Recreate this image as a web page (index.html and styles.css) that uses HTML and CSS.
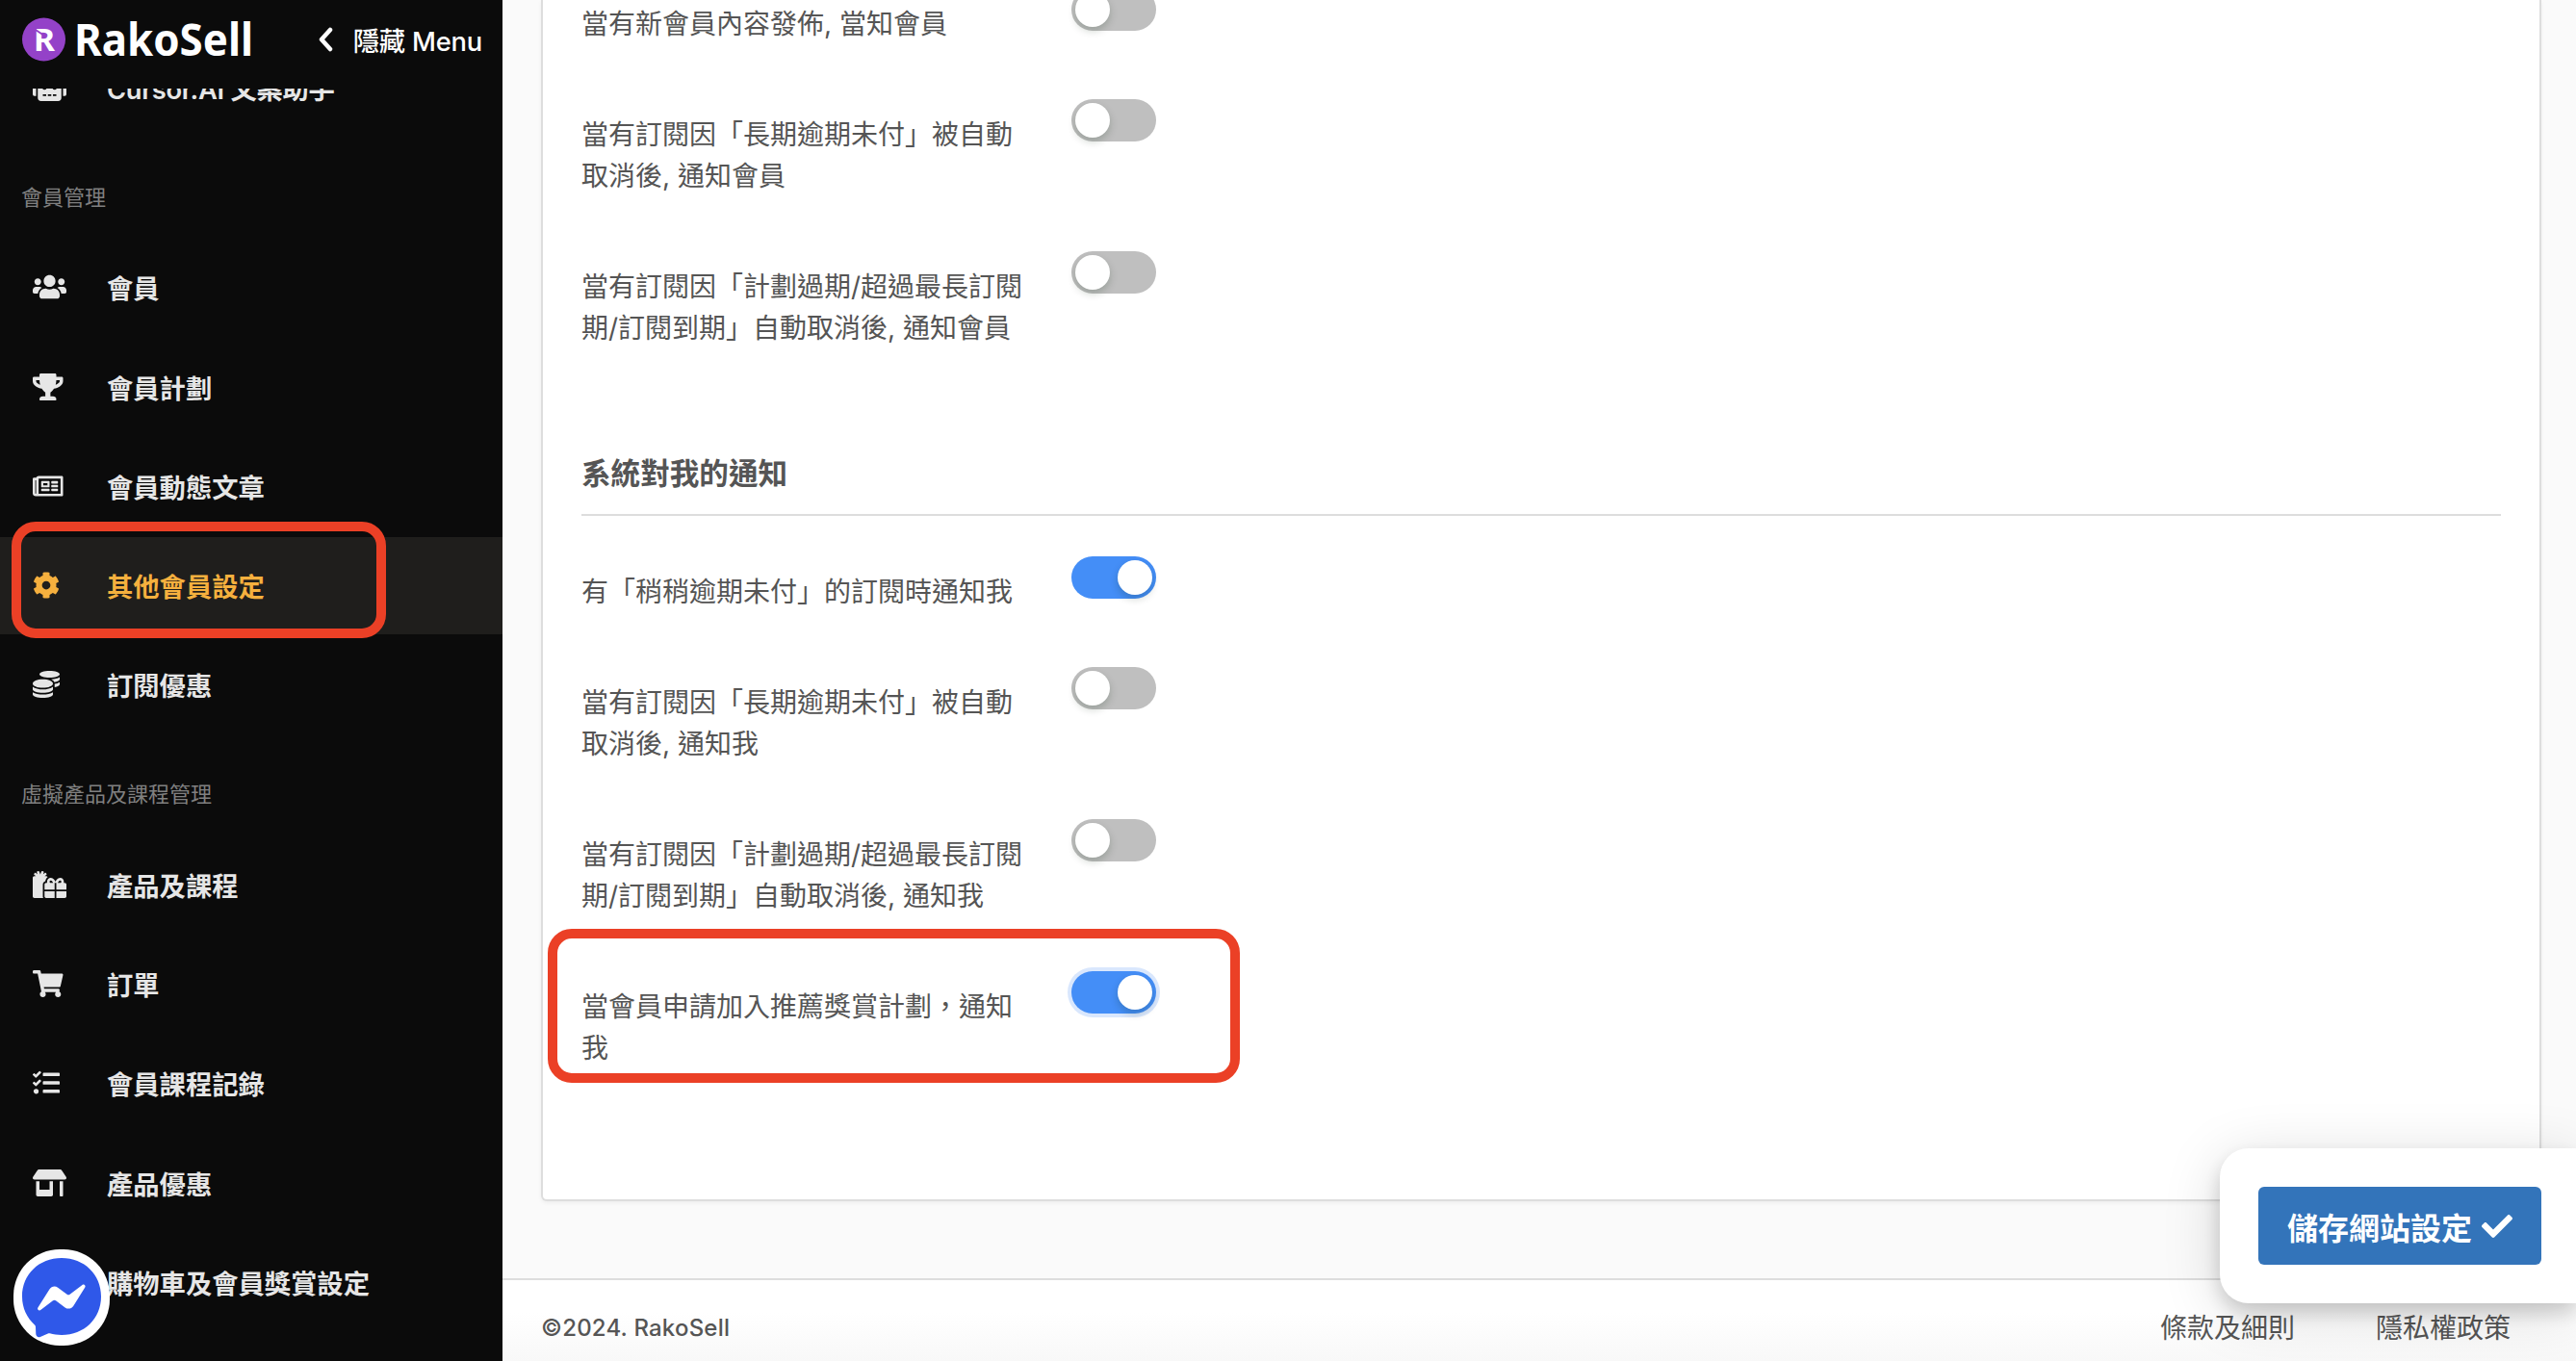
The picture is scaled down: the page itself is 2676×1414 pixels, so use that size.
FILE: index.html
```html
<!DOCTYPE html>
<html lang="zh-Hant">
<head>
    <meta charset="utf-8">
    <title>RakoSell</title>
    <link rel="stylesheet" href="styles.css">
</head>
<body>
    <div class="page">
        <aside class="sidebar">
            <div class="sidebar-header">
                <svg class="logo" width="245" height="72" viewBox="0 -12 245 72">
                    <circle cx="22.5" cy="24" r="22.5" fill="#9442c8"/>
                    <text class="logo-mark" x="12" y="36" textLength="22" lengthAdjust="spacingAndGlyphs">R</text>
                    <path d="M11 12l12 8" stroke="#9442c8" stroke-width="2"/>
                    <text class="logo-text" x="54" y="41" textLength="186" lengthAdjust="spacingAndGlyphs">RakoSell</text>
                </svg>
                <a class="menu-toggle">
                    <svg width="16" height="26" viewBox="0 0 16 26"><path d="M13 3L4 13l9 10" fill="none" stroke="#fff" stroke-width="4.5" stroke-linecap="round" stroke-linejoin="round"/></svg>
                    <span>隱藏 Menu</span>
                </a>
            </div>
            <nav class="menu">
                <ul>
                    <li class="item">
                        <svg class="icon" viewBox="0 0 640 512" preserveAspectRatio="xMinYMid"><path d="M32,224H64V416H32A31.96,31.96,0,0,1,0,384V256A31.96,31.96,0,0,1,32,224Zm512-48V448a64.06,64.06,0,0,1-64,64H160a64.06,64.06,0,0,1-64-64V176a79.97,79.97,0,0,1,80-80H288V32a32,32,0,0,1,64,0V96H464A79.97,79.97,0,0,1,544,176ZM264,256a40,40,0,1,0-40,40A40,40,0,0,0,264,256Zm-8,128H192v32h64Zm96,0H288v32h64ZM456,256a40,40,0,1,0-40,40A40,40,0,0,0,456,256Zm-8,128H384v32h64ZM640,256V384a31.96,31.96,0,0,1-32,32H576V224h32A31.96,31.96,0,0,1,640,256Z"/></svg>
                        <span>Cursor.AI 文案助手</span>
                    </li>
                    <li class="label">會員管理</li>
                    <li class="item">
                        <svg class="icon" viewBox="0 0 640 512" preserveAspectRatio="xMinYMid"><path d="M96 224c35.3 0 64-28.7 64-64s-28.7-64-64-64-64 28.7-64 64 28.7 64 64 64zm448 0c35.3 0 64-28.7 64-64s-28.7-64-64-64-64 28.7-64 64 28.7 64 64 64zm32 32h-64c-17.6 0-33.5 7.1-45.1 18.6 40.3 22.1 68.9 62 75.1 109.4h66c17.7 0 32-14.3 32-32v-32c0-35.3-28.7-64-64-64zm-256 0c61.9 0 112-50.1 112-112S381.9 32 320 32 208 82.1 208 144s50.1 112 112 112zm76.8 32h-8.3c-20.8 10-43.9 16-68.5 16s-47.6-6-68.5-16h-8.3C179.6 288 128 339.6 128 403.2V432c0 26.5 21.5 48 48 48h288c26.5 0 48-21.5 48-48v-28.8c0-63.6-51.6-115.2-115.2-115.2zm-223.7-13.4C161.5 263.1 145.6 256 128 256H64c-35.3 0-64 28.7-64 64v32c0 17.7 14.3 32 32 32h65.9c6.3-47.4 34.9-87.3 75.2-109.4z"/></svg>
                        <span>會員</span>
                    </li>
                    <li class="item">
                        <svg class="icon" viewBox="0 0 576 512" preserveAspectRatio="xMinYMid"><path d="M552 64H448V24c0-13.3-10.7-24-24-24H152c-13.3 0-24 10.7-24 24v40H24C10.7 64 0 74.7 0 88v56c0 35.7 22.5 72.4 61.9 100.7 31.5 22.7 69.8 37.1 110 41.7C203.3 338.5 240 360 240 360v72h-48c-35.3 0-64 20.7-64 56v12c0 6.6 5.4 12 12 12h296c6.6 0 12-5.4 12-12v-12c0-35.3-28.7-56-64-56h-48v-72s36.7-21.5 68.1-73.6c40.3-4.6 78.6-19 110-41.7 39.3-28.3 61.9-65 61.9-100.7V88c0-13.3-10.7-24-24-24zM99.3 192.8C74.9 175.2 64 155.6 64 144v-16h64.2c1 32.6 5.8 61.2 12.8 86.2-15.1-5.2-29.2-12.4-41.7-21.4zM512 144c0 16.1-17.7 36.1-35.3 48.8-12.5 9-26.7 16.2-41.8 21.4 7-25 11.8-53.6 12.8-86.2H512v16z"/></svg>
                        <span>會員計劃</span>
                    </li>
                    <li class="item">
                        <svg class="icon" viewBox="0 0 576 512" preserveAspectRatio="xMinYMid"><path d="M552 64H112c-20.858 0-38.643 13.377-45.248 32H24c-13.255 0-24 10.745-24 24v272c0 30.928 25.072 56 56 56h496c13.255 0 24-10.745 24-24V88c0-13.255-10.745-24-24-24zM48 392V144h16v248c0 4.411-3.589 8-8 8s-8-3.589-8-8zm480 8H111.422c.374-2.614.578-5.283.578-8V112h416v288zM172 280h136c6.627 0 12-5.373 12-12v-96c0-6.627-5.373-12-12-12H172c-6.627 0-12 5.373-12 12v96c0 6.627 5.373 12 12 12zm28-80h80v40h-80v-40zm-40 140v-24c0-6.627 5.373-12 12-12h136c6.627 0 12 5.373 12 12v24c0 6.627-5.373 12-12 12H172c-6.627 0-12-5.373-12-12zm192 0v-24c0-6.627 5.373-12 12-12h104c6.627 0 12 5.373 12 12v24c0 6.627-5.373 12-12 12H364c-6.627 0-12-5.373-12-12zm0-144v-24c0-6.627 5.373-12 12-12h104c6.627 0 12 5.373 12 12v24c0 6.627-5.373 12-12 12H364c-6.627 0-12-5.373-12-12zm0 72v-24c0-6.627 5.373-12 12-12h104c6.627 0 12 5.373 12 12v24c0 6.627-5.373 12-12 12H364c-6.627 0-12-5.373-12-12z"/></svg>
                        <span>會員動態文章</span>
                    </li>
                    <li class="item active">
                        <svg class="icon" viewBox="0 0 512 512" preserveAspectRatio="xMinYMid"><path d="M487.4 315.7l-42.6-24.6c4.3-23.2 4.3-47 0-70.2l42.6-24.6c4.9-2.8 7.1-8.6 5.5-14-11.1-35.6-30-67.8-54.7-94.6-3.8-4.1-10-5.1-14.8-2.3L380.8 110c-17.9-15.4-38.5-27.3-60.8-35.1V25.8c0-5.6-3.9-10.5-9.4-11.7-36.7-8.2-74.3-7.8-109.2 0-5.5 1.2-9.4 6.1-9.4 11.7V75c-22.2 7.9-42.8 19.8-60.8 35.1L88.7 85.5c-4.9-2.8-11-1.9-14.8 2.3-24.7 26.7-43.6 58.9-54.7 94.6-1.7 5.4.6 11.2 5.5 14L67.3 221c-4.3 23.2-4.3 47 0 70.2l-42.6 24.6c-4.9 2.8-7.1 8.6-5.5 14 11.1 35.6 30 67.8 54.7 94.6 3.8 4.1 10 5.1 14.8 2.3l42.6-24.6c17.9 15.4 38.5 27.3 60.8 35.1v49.2c0 5.6 3.9 10.5 9.4 11.7 36.7 8.2 74.3 7.8 109.2 0 5.5-1.2 9.4-6.1 9.4-11.7v-49.2c22.2-7.9 42.8-19.8 60.8-35.1l42.6 24.6c4.9 2.8 11 1.9 14.8-2.3 24.7-26.7 43.6-58.9 54.7-94.6 1.5-5.500-.7-11.300-5.600-14.100zM256 336c-44.100 0-80-35.900-80-80s35.900-80 80-80 80 35.900 80 80-35.900 80-80 80z"/></svg>
                        <span>其他會員設定</span>
                    </li>
                    <li class="item">
                        <svg class="icon" viewBox="0 0 512 512" preserveAspectRatio="xMinYMid"><path d="M0 405.3V448c0 35.3 86 64 192 64s192-28.7 192-64v-42.7C342.7 434.4 267.2 448 192 448S41.3 434.4 0 405.3zM320 128c106 0 192-28.7 192-64S426 0 320 0 128 28.7 128 64s86 64 192 64zM0 300.4V352c0 35.3 86 64 192 64s192-28.7 192-64v-51.6c-41.3 34-116.9 51.6-192 51.6S41.3 334.4 0 300.4zm416 11c57.3-11.1 96-31.7 96-55.4v-42.7c-23.2 16.4-57.3 27.6-96 34.5v63.6zM192 160C86 160 0 195.8 0 240s86 80 192 80 192-35.8 192-80-86-80-192-80zm219.3 56.3c60-10.8 100.7-32 100.7-56.3v-42.7c-35.5 25.1-96.5 38.6-160.7 41.8 29.5 14.3 51.2 33.5 60 57.2z"/></svg>
                        <span>訂閱優惠</span>
                    </li>
                    <li class="label">虛擬產品及課程管理</li>
                    <li class="item">
                        <svg class="icon" viewBox="0 0 640 512" preserveAspectRatio="xMinYMid"><path d="M240.6 194.1c1.9-30.8 17.3-61.2 44-79.8C279.4 103.5 268.7 96 256 96h-29.4l30.7-22c7.2-5.1 8.9-15.1 3.7-22.3l-9.3-13c-5.1-7.2-15.1-8.9-22.3-3.7l-32 22.9 11.5-30.6c3.1-8.3-1.1-17.5-9.4-20.6l-15-5.6c-8.3-3.1-17.5 1.1-20.6 9.4l-19.9 53-19.9-53.1C121 2.1 111.8-2.1 103.5 1l-15 5.6C80.2 9.7 76 19 79.2 27.2l11.5 30.6L58.6 35c-7.2-5.1-17.2-3.5-22.3 3.7l-9.3 13c-5.1 7.2-3.5 17.2 3.7 22.3l30.7 22H32c-17.7 0-32 14.3-32 32v352c0 17.7 14.3 32 32 32h168.9c-5.5-9.5-8.9-20.3-8.9-32V256c0-29.9 20.8-55 48.6-61.9zM224 480c0 17.7 14.3 32 32 32h160V384H224v96zm224 32h160c17.7 0 32-14.3 32-32v-96H448v128zm160-288h-20.4c2.6-7.6 4.4-15.5 4.4-23.8 0-35.5-27-72.2-72.1-72.2-48.1 0-75.9 47.7-87.9 75.3-12.1-27.6-39.9-75.3-87.9-75.3-45.1 0-72.1 36.7-72.1 72.2 0 8.3 1.7 16.2 4.4 23.8H256c-17.7 0-32 14.3-32 32v96h192V224h15.3l.7-.2.7.2H448v128h192v-96c0-17.7-14.3-32-32-32zm-272 0c-2.7-1.4-5.1-3-7.2-4.8-7.3-6.4-8.8-13.8-8.8-19 0-9.7 6.4-24.2 24.1-24.2 18.7 0 35.6 27.4 44.5 48H336zm199.2-4.8c-2.1 1.8-4.5 3.4-7.2 4.8h-52.6c8.8-20.3 25.8-48 44.5-48 17.7 0 24.1 14.5 24.1 24.2 0 5.2-1.5 12.6-8.8 19z"/></svg>
                        <span>產品及課程</span>
                    </li>
                    <li class="item">
                        <svg class="icon" viewBox="0 0 576 512" preserveAspectRatio="xMinYMid"><path d="M528.12 301.319l47.273-208C578.806 78.301 567.391 64 551.99 64H159.208l-9.166-44.81C147.758 8.021 137.93 0 126.529 0H24C10.745 0 0 10.745 0 24v16c0 13.255 10.745 24 24 24h69.883l70.248 343.435C147.325 417.1 136 435.222 136 456c0 30.928 25.072 56 56 56s56-25.072 56-56c0-15.674-6.447-29.835-16.824-40h209.647C430.447 426.165 424 440.326 424 456c0 30.928 25.072 56 56 56s56-25.072 56-56c0-22.172-12.888-41.332-31.579-50.405l5.517-24.276c3.413-15.018-8.002-29.319-23.403-29.319H218.117l-6.545-32h293.145c11.206 0 20.92-7.754 23.403-18.681z"/></svg>
                        <span>訂單</span>
                    </li>
                    <li class="item">
                        <svg class="icon" viewBox="0 0 512 512" preserveAspectRatio="xMinYMid"><path d="M139.61 35.5a12 12 0 0 0-17 0L58.93 98.81l-22.7-22.12a12 12 0 0 0-17 0L3.53 92.41a12 12 0 0 0 0 17l47.59 47.4a12.78 12.78 0 0 0 17.61 0l15.59-15.62L156.52 69a12.09 12.09 0 0 0 .09-17zm0 159.19a12 12 0 0 0-17 0l-63.68 63.72-22.7-22.1a12 12 0 0 0-17 0L3.53 252a12 12 0 0 0 0 17L51 316.5a12.77 12.77 0 0 0 17.6 0l15.7-15.69 72.2-72.22a12 12 0 0 0 .09-16.9zM64 368c-26.49 0-48.59 21.5-48.59 48S37.53 464 64 464a48 48 0 0 0 0-96zm432 16H208a16 16 0 0 0-16 16v32a16 16 0 0 0 16 16h288a16 16 0 0 0 16-16v-32a16 16 0 0 0-16-16zm0-320H208a16 16 0 0 0-16 16v32a16 16 0 0 0 16 16h288a16 16 0 0 0 16-16V80a16 16 0 0 0-16-16zm0 160H208a16 16 0 0 0-16 16v32a16 16 0 0 0 16 16h288a16 16 0 0 0 16-16v-32a16 16 0 0 0-16-16z"/></svg>
                        <span>會員課程記錄</span>
                    </li>
                    <li class="item">
                        <svg class="icon" viewBox="0 0 640 512" preserveAspectRatio="xMinYMid"><path d="M320 384H128V224H64v256c0 17.7 14.3 32 32 32h256c17.7 0 32-14.3 32-32V224h-64v160zm314.6-241.8l-85.3-128c-6-8.9-16-14.2-26.7-14.2H117.4c-10.7 0-20.7 5.3-26.6 14.2l-85.3 128c-14.2 21.3 1 49.8 26.6 49.8H608c25.5 0 40.7-28.5 26.6-49.8zM512 496c0 8.8 7.2 16 16 16h32c8.8 0 16-7.2 16-16V224h-64v272z"/></svg>
                        <span>產品優惠</span>
                    </li>
                    <li class="item">
                        <svg class="icon" viewBox="0 0 640 512"></svg>
                        <span>購物車及會員獎賞設定</span>
                    </li>
                </ul>
            </nav>
        </aside>

        <main class="main">
            <section class="card">
                <div class="row">
                    <label>當有新會員內容發佈, 當知會員</label>
                    <span class="switch"></span>
                </div>
                <div class="row">
                    <label>當有訂閱因「長期逾期未付」被自動取消後, 通知會員</label>
                    <span class="switch"></span>
                </div>
                <div class="row">
                    <label>當有訂閱因「計劃過期/超過最長訂閱期/訂閱到期」自動取消後, 通知會員</label>
                    <span class="switch"></span>
                </div>
                <h2>系統對我的通知</h2>
                <div class="row">
                    <label>有「稍稍逾期未付」的訂閱時通知我</label>
                    <span class="switch on"></span>
                </div>
                <div class="row">
                    <label>當有訂閱因「長期逾期未付」被自動取消後, 通知我</label>
                    <span class="switch"></span>
                </div>
                <div class="row">
                    <label>當有訂閱因「計劃過期/超過最長訂閱期/訂閱到期」自動取消後, 通知我</label>
                    <span class="switch"></span>
                </div>
                <div class="row">
                    <label>當會員申請加入推薦獎賞計劃，通知我</label>
                    <span class="switch on focus"></span>
                </div>
            </section>
            <footer class="footer">
                <span class="copyright">©2024. RakoSell</span>
                <div class="links">
                    <a>條款及細則</a>
                    <a>隱私權政策</a>
                </div>
            </footer>
        </main>
    </div>

    <div class="save-bar">
        <button class="save-btn">
            <span>儲存網站設定</span>
            <svg width="32" height="32" viewBox="0 0 512 512"><path fill="#fff" d="M173.898 439.404l-166.4-166.4c-9.997-9.997-9.997-26.206 0-36.204l36.203-36.204c9.997-9.998 26.207-9.998 36.204 0L192 312.69 432.095 72.596c9.997-9.997 26.207-9.997 36.204 0l36.203 36.204c9.997 9.997 9.997 26.206 0 36.204l-294.4 294.401c-9.998 9.997-26.207 9.997-36.204-.001z"/></svg>
        </button>
    </div>

    <div class="messenger">
        <svg width="100" height="100" viewBox="0 0 100 100">
            <path fill="#2f58e9" d="M50 9C26.500 9 9 26 9 49c0 12 5 22 13 29.500 .8.700 1 1.500 1 2.500l.3 7c.1 2.400 2.400 3.800 4.500 2.900l8-3.500c.7-.3 1.400-.3 2-.1 3.700 1 7.900 1.700 12.200 1.700 23.500 0 41-17 41-40S73.500 9 50 9z"/>
            <path fill="#fff" d="M25.400 60.500l12-19.100c2-3.100 5.900-3.800 8.700-1.700l9.500 7.100c.9.700 2.100.7 3 0l12.900-9.800c1.700-1.300 4 .8 2.800 2.600l-12 19.100c-2 3-5.900 3.800-8.700 1.700L44 53.300c-.9-.7-2.100-.7-3 0l-12.800 9.800c-1.700 1.300-4-.8-2.800-2.600z"/>
        </svg>
    </div>

    <div class="highlight highlight-menu"></div>
    <div class="highlight highlight-row"></div>
</body>
</html>
```
FILE: styles.css
```css
* {
    box-sizing: border-box;
}
html, body {
    height: 100%;
    margin: 0;
    overflow: hidden;
}
body {
    font-family: Inter, "Noto Sans CJK TC", sans-serif;
    font-size: 28px;
    color: #555;
    background-color: #fafafa;
}
.page {
    display: flex;
    height: 100%;
}

/* sidebar */
.sidebar {
    display: flex;
    flex-direction: column;
    flex: 0 0 522px;
    height: 100%;
    color: #e6e6e6;
    background-color: #0b0b0b;
}
.sidebar-header {
    display: flex;
    justify-content: space-between;
    align-items: center;
    flex: 0 0 92px;
    padding: 0 21px 10px 23px;
}
.logo {
    overflow: visible;
}
.logo-mark {
    font: bold 32px "Noto Sans", sans-serif;
    fill: #fff;
}
.logo-text {
    font: bold 47px "Noto Sans", sans-serif;
    fill: #fff;
}
.menu-toggle {
    display: flex;
    align-items: center;
    gap: 21px;
    font-size: 27.3px;
    font-weight: 500;
    letter-spacing: -0.2px;
    white-space: nowrap;
    color: #fff;
}
.menu {
    flex: 1;
    min-height: 0;
    overflow: hidden;
}
.menu ul {
    margin: -51.5px 0 0;
    padding: 0;
    list-style: none;
}
.item {
    display: flex;
    align-items: center;
    height: 101px;
    margin-bottom: 2.3px;
    padding-left: 34px;
    font-size: 27.3px;
    font-weight: 600;
    white-space: nowrap;
}
.item:first-child {
    letter-spacing: -0.3px;
}
.item span {
    margin-left: 8px;
}
.icon {
    width: 69px;
    height: 28px;
    fill: currentColor;
}
.active {
    color: #f5b03e;
    background-color: #1f1e1c;
}
.label {
    height: 104px;
    padding: 43px 0 0 22px;
    font-size: 22px;
    line-height: 36px;
    color: #808080;
}

/* content */
.main {
    display: flex;
    flex-direction: column;
    flex: 1;
    min-width: 0;
}
.card {
    flex: 1;
    min-height: 0;
    margin: 0 36px 80px 40px;
    padding: 0 40px;
    background-color: #fff;
    border: 2px solid #ddd;
    border-top: none;
    border-radius: 0 0 6px 6px;
    box-shadow: 0 2px 4px rgba(0,0,0,0.05);
}
.row {
    display: flex;
    align-items: flex-start;
    gap: 48px;
    padding-bottom: 56px;
}
.row:first-child {
    margin-top: -12px;
}
.row label {
    width: 461px;
    padding-top: 16px;
    line-height: 43px;
}
.switch {
    width: 88px;
    height: 44px;
    padding: 4px;
    background-color: #bfbfbf;
    border-radius: 22px;
}
.switch::before {
    content: "";
    display: block;
    width: 36px;
    height: 36px;
    background-color: #fff;
    border-radius: 50%;
    box-shadow: 0 4px 8px rgba(0,35,11,0.2);
}
.on {
    background-color: #448ef7;
}
.on::before {
    margin-left: auto;
}
.focus {
    box-shadow: 0 0 0 4px #d9e7fd;
}
h2 {
    height: 117px;
    margin: 0 0 42px;
    padding-top: 50px;
    font-size: 30.6px;
    font-weight: 600;
    line-height: 46px;
    border-bottom: 2px solid #ddd;
}
.footer {
    display: flex;
    justify-content: space-between;
    flex: 0 0 86px;
    padding: 29px 68px 0 40px;
    line-height: 42px;
    background: linear-gradient(#fff 40%, #f8f8f8);
    border-top: 2px solid #ddd;
}
.copyright {
    font-size: 24px;
    font-weight: 500;
    letter-spacing: 0.2px;
}
.links {
    display: flex;
    gap: 84px;
}

/* floating elements */
.save-bar {
    position: fixed;
    right: 0;
    bottom: 60px;
    width: 370px;
    padding: 40px 36px 40px 40px;
    background-color: #fff;
    border-radius: 30px 0 0 30px;
    box-shadow: 0 10px 60px rgba(0,0,0,0.15), 0 10px 20px rgba(0,0,0,0.16);
}
.save-btn {
    display: flex;
    justify-content: center;
    align-items: center;
    gap: 10px;
    width: 100%;
    height: 81px;
    padding: 0;
    font-family: inherit;
    font-size: 32px;
    font-weight: bold;
    color: #fff;
    background-color: #3374ba;
    border: none;
    border-radius: 6px;
}
.messenger {
    position: fixed;
    left: 14px;
    top: 1298px;
    width: 100px;
    height: 100px;
    background-color: #fff;
    border-radius: 48px;
}
.highlight {
    position: fixed;
    border: 10px solid #eb4026;
    border-radius: 25px;
}
.highlight-menu {
    left: 12px;
    top: 542px;
    width: 389px;
    height: 121px;
}
.highlight-row {
    left: 569px;
    top: 965px;
    width: 719px;
    height: 160px;
}
```
